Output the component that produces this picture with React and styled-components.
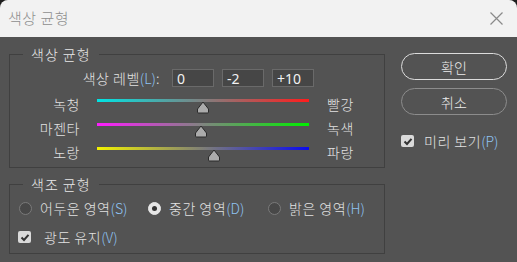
import { Fragment } from 'react';
import styled, { createGlobalStyle } from 'styled-components';

const GlobalStyle = createGlobalStyle`
  html, body {
    margin: 0;
    background: #1e1e1e;
  }
  body {
    font-family: "Noto Sans CJK KR", "Noto Sans", sans-serif;
  }
`;

const Window = styled.div`
  width: 517px;
  height: 262px;
  background: #535353;
  border-radius: 8px 8px 0 0;
  overflow: hidden;
  color: #e2e2e2;
  font-size: 14px;
  font-weight: 300;
`;

const TitleBar = styled.div`
  height: 37px;
  background: #f2f2f2;
  display: flex;
  align-items: center;
  justify-content: space-between;
  padding: 0 14px 0 8px;
  box-sizing: border-box;
`;

const Title = styled.span`
  font-size: 15px;
  color: #8e8e8e;
  line-height: 1;
  margin-top: -2px;
  letter-spacing: 0.5px;
`;

const Body = styled.div`
  display: flex;
  padding: 8px 0 0 9px;
`;

const LeftColumn = styled.div`
  width: 376px;
`;

const RightColumn = styled.div`
  width: 106px;
  margin: 8px 0 0 16px;
  display: flex;
  flex-direction: column;
`;

const Group = styled.fieldset`
  margin: ${p => (p.$second ? '7px' : '0')} 0 0 0;
  padding: 0 0 ${p => p.$bottom || 0}px 0;
  border: 1px solid #404040;
  min-width: 0;
`;

const Legend = styled.legend`
  margin-left: 13px;
  padding: 0 8px;
  line-height: 18px;
  font-size: 14px;
  letter-spacing: 1px;
  color: #e8e8e8;
`;

const LevelRow = styled.div`
  display: flex;
  align-items: center;
  margin-top: 6px;
  height: 18px;
`;

const LevelLabel = styled.span`
  width: 150px;
  text-align: right;
  letter-spacing: 0.5px;
`;

const Mn = styled.span`
  color: #8fc3f2;
  letter-spacing: 0;
`;

const Inputs = styled.div`
  display: flex;
  gap: 8px;
  margin-left: 12px;
`;

const NumberInput = styled.input`
  width: 42px;
  height: 18px;
  box-sizing: border-box;
  background: #464646;
  border: 1px solid #6a6a6a;
  color: #f2f2f2;
  font-family: "Noto Sans", sans-serif;
  font-size: 14px;
  padding: 0 4px;
  outline: none;
`;

const SliderGrid = styled.div`
  display: grid;
  grid-template-columns: 70px 212px auto;
  column-gap: 17px;
  margin-top: 5px;
`;

const SideLabel = styled.span`
  height: 24px;
  line-height: 24px;
  text-align: ${p => (p.$right ? 'left' : 'right')};
  margin-left: ${p => (p.$right ? '1px' : '0')};
  letter-spacing: 0.5px;
`;

const Slider = styled.div`
  position: relative;
  height: 24px;
`;

const Track = styled.div`
  position: absolute;
  left: 0;
  right: 0;
  top: 7px;
  height: 3px;
  background: linear-gradient(to right, ${p => p.$from}, ${p => p.$to});
`;

const Thumb = styled.svg`
  position: absolute;
  top: 9px;
  width: 14px;
  height: 13px;
`;

const RadioRow = styled.div`
  display: grid;
  grid-template-columns: 129px 120px auto;
  align-items: center;
  height: 20px;
  margin: 5px 0 0 9px;
`;

const Option = styled.label`
  display: flex;
  align-items: center;
  gap: 8px;
  white-space: nowrap;
`;

const Caption = styled.span`
  letter-spacing: 0.5px;
  white-space: nowrap;
`;

const RadioDot = styled.span`
  width: 13px;
  height: 13px;
  box-sizing: border-box;
  border-radius: 50%;
  border: 1px solid ${p => (p.$on ? '#e6e6e6' : '#7a7a7a')};
  background: ${p => (p.$on ? '#e6e6e6' : '#484848')};
  display: flex;
  align-items: center;
  justify-content: center;
  &::after {
    content: '';
    width: 5px;
    height: 5px;
    border-radius: 50%;
    background: ${p => (p.$on ? '#333' : 'transparent')};
  }
`;

const CheckRow = styled.label`
  display: flex;
  align-items: center;
  gap: ${p => p.$gap || 13}px;
  height: 20px;
  margin: ${p => p.$margin || '0'};
`;

const Box = styled.span`
  flex: none;
  width: 13px;
  height: 12px;
  border-radius: 2px;
  background: #dadada;
  display: flex;
  align-items: center;
  justify-content: center;
`;

const PillButton = styled.button`
  width: 106px;
  height: 27px;
  border-radius: 14px;
  background: transparent;
  border: ${p => (p.$primary ? '1.5px solid #dcdcdc' : '1px solid #8c8c8c')};
  color: #ececec;
  font-family: inherit;
  font-size: 14px;
  font-weight: 300;
  padding: 0;
  margin-bottom: 8px;
`;

const Check = () => (
  <svg width="10" height="9" viewBox="0 0 10 9">
    <path d="M1.5 4.5 L4 7 L8.5 1.8" fill="none" stroke="#333" strokeWidth="2" />
  </svg>
);

const sliders = [
  { left: '녹청', right: '빨강', from: '#00e4e4', to: '#ff1c1c', value: 0 },
  { left: '마젠타', right: '녹색', from: '#ff1cff', to: '#00ee00', value: -2 },
  { left: '노랑', right: '파랑', from: '#f2f200', to: '#0a0aee', value: 10 },
];

const tones = [
  { label: '어두운 영역', key: 'S', on: false },
  { label: '중간 영역', key: 'D', on: true },
  { label: '밝은 영역', key: 'H', on: false },
];

export default function App() {
  return (
    <>
      <GlobalStyle />
      <Window>
        <TitleBar>
          <Title>색상 균형</Title>
          <svg width="13" height="13" viewBox="0 0 13 13">
            <path d="M0.5 0.5 L12.5 12.5 M12.5 0.5 L0.5 12.5" stroke="#8a8a8a" strokeWidth="1.2" />
          </svg>
        </TitleBar>
        <Body>
          <LeftColumn>
            <Group $bottom={3}>
              <Legend>색상 균형</Legend>
              <LevelRow>
                <LevelLabel>
                  색상 레벨<Mn>(L)</Mn>:
                </LevelLabel>
                <Inputs>
                  <NumberInput defaultValue="0" />
                  <NumberInput defaultValue="-2" />
                  <NumberInput defaultValue="+10" />
                </Inputs>
              </LevelRow>
              <SliderGrid>
                {sliders.map(s => (
                  <Fragment key={s.left}>
                    <SideLabel>{s.left}</SideLabel>
                    <Slider>
                      <Track $from={s.from} $to={s.to} />
                      <Thumb
                        viewBox="0 0 14 13"
                        style={{ left: ((s.value + 100) / 200) * 212 - 7 }}
                      >
                        <path
                          d="M7 1 L12.5 8 L12.5 11 Q12.5 12 11.5 12 L2.5 12 Q1.5 12 1.5 11 L1.5 8 Z"
                          fill="#ababab"
                          stroke="#2a2a2a"
                          strokeWidth="1"
                          strokeLinejoin="round"
                        />
                      </Thumb>
                    </Slider>
                    <SideLabel $right>{s.right}</SideLabel>
                  </Fragment>
                ))}
              </SliderGrid>
            </Group>
            <Group $second $bottom={6}>
              <Legend>색조 균형</Legend>
              <RadioRow>
                {tones.map(t => (
                  <Option key={t.key}>
                    <RadioDot $on={t.on} />
                    <Caption>
                      {t.label}
                      <Mn>({t.key})</Mn>
                    </Caption>
                  </Option>
                ))}
              </RadioRow>
              <CheckRow $margin="9px 0 0 8px">
                <Box>
                  <Check />
                </Box>
                <Caption>
                  광도 유지<Mn>(V)</Mn>
                </Caption>
              </CheckRow>
            </Group>
          </LeftColumn>
          <RightColumn>
            <PillButton $primary>확인</PillButton>
            <PillButton>취소</PillButton>
            <CheckRow $gap={10} $margin="8px 0 0 0">
              <Box>
                <Check />
              </Box>
              <Caption>
                미리 보기<Mn>(P)</Mn>
              </Caption>
            </CheckRow>
          </RightColumn>
        </Body>
      </Window>
    </>
  );
}
